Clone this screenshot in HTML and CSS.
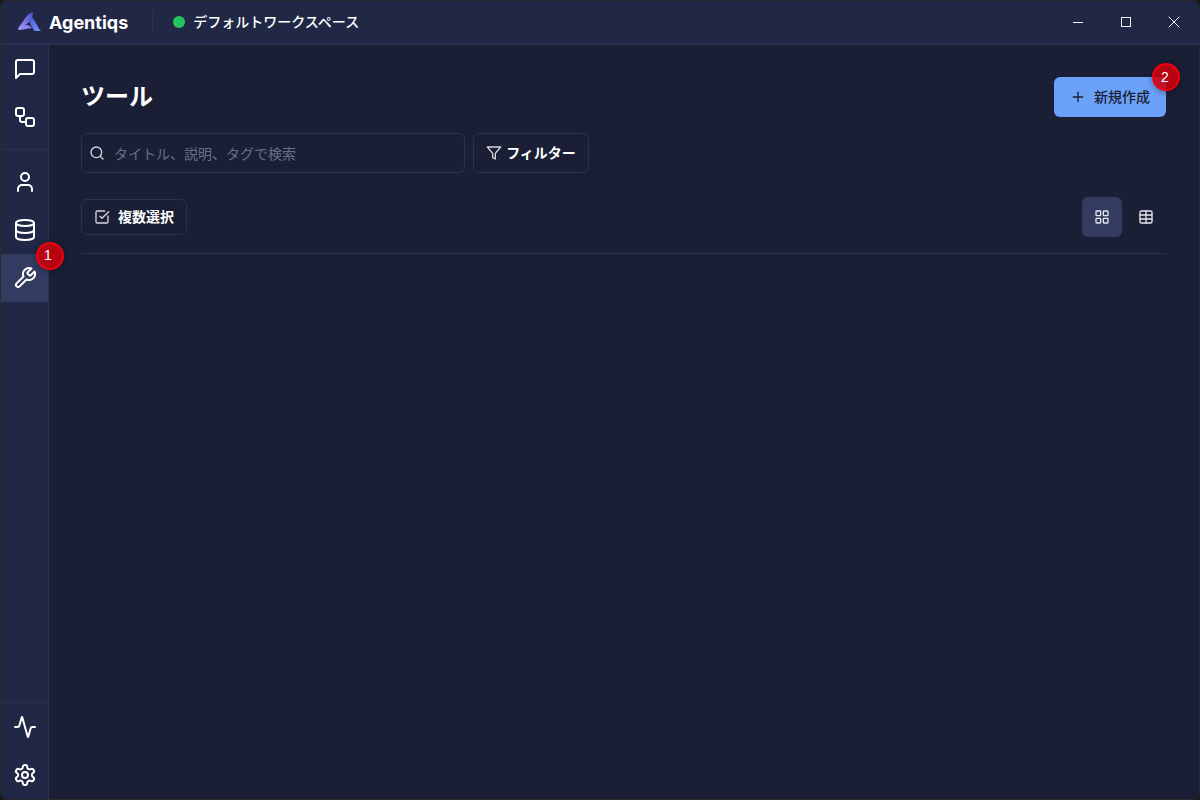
FILE: index.html
```html
<!DOCTYPE html>
<html lang="ja">
<head>
    <meta charset="UTF-8">
    <meta name="viewport" content="width=device-width, initial-scale=1.0">
    <title>Agentiqs</title>
    <link rel="stylesheet" href="styles.css">
</head>
<body>
    <div class="window">
        <header class="titlebar">
            <div class="brand">
                <svg class="logo" width="24" height="24" viewBox="0 0 24 24">
                    <defs>
                        <linearGradient id="logoGrad" x1="0" y1="1" x2="0.7" y2="0">
                            <stop offset="0" stop-color="#a998f6"/>
                            <stop offset="0.6" stop-color="#7a70e8"/>
                            <stop offset="1" stop-color="#4f55cc"/>
                        </linearGradient>
                        <linearGradient id="logoLeg" x1="0" y1="0" x2="1" y2="1">
                            <stop offset="0" stop-color="#4c5fd8"/>
                            <stop offset="1" stop-color="#7596f8"/>
                        </linearGradient>
                    </defs>
                    <path d="M16 2 C16 7 14 10 11 13 L8 15.500 C11 14.500 13 15.500 15 18 L3 20 C1.500 20.300 .6 19 1.300 18 L9 7 C11 4 13 2.800 16 2 Z" fill="url(#logoGrad)"/>
                    <path d="M15 7 L20 15 C21 17.500 22.500 20 24 21 L18 21 C16 20 15 16 12.500 12.500 Z" fill="url(#logoLeg)"/>
                </svg>
                <span class="brand-name">Agentiqs</span>
            </div>
            <div class="workspace">
                <span class="status-dot"></span>
                <span class="workspace-name">デフォルトワークスペース</span>
            </div>
            <div class="window-controls">
                <button class="win-btn"><svg width="12" height="12" viewBox="0 0 12 12"><path d="M1 6.500h10" stroke="currentColor" fill="none"/></svg></button>
                <button class="win-btn"><svg width="12" height="12" viewBox="0 0 12 12"><rect x="1.500" y="1.500" width="9" height="9" stroke="currentColor" fill="none"/></svg></button>
                <button class="win-btn"><svg width="12" height="12" viewBox="0 0 12 12"><path d="M.7.700l10.600 10.600M11.300.700L.7 11.300" stroke="currentColor" fill="none"/></svg></button>
            </div>
        </header>

        <div class="body">
            <nav class="sidebar">
                <div class="nav-group nav-top">
                    <a class="nav-item"><svg class="icon-nav" viewBox="0 0 24 24"><path d="M21 15a2 2 0 0 1-2 2H7l-4 4V5a2 2 0 0 1 2-2h14a2 2 0 0 1 2 2z"/></svg></a>
                    <a class="nav-item"><svg class="icon-nav" viewBox="0 0 24 24"><rect x="3" y="3" width="8" height="8" rx="2"/><path d="M7 11v4a2 2 0 0 0 2 2h4"/><rect x="13" y="13" width="8" height="8" rx="2"/></svg></a>
                </div>
                <div class="nav-group nav-middle">
                    <a class="nav-item"><svg class="icon-nav" viewBox="0 0 24 24"><path d="M19 21v-2a4 4 0 0 0-4-4H9a4 4 0 0 0-4 4v2"/><circle cx="12" cy="7" r="4"/></svg></a>
                    <a class="nav-item"><svg class="icon-nav" viewBox="0 0 24 24"><ellipse cx="12" cy="5" rx="9" ry="3"/><path d="M3 5v14a9 3 0 0 0 18 0V5"/><path d="M3 12a9 3 0 0 0 18 0"/></svg></a>
                    <a class="nav-item active"><svg class="icon-nav" viewBox="0 0 24 24"><path d="M14.700 6.300a1 1 0 0 0 0 1.400l1.600 1.600a1 1 0 0 0 1.400 0l3.770-3.770a6 6 0 0 1-7.940 7.940l-6.910 6.910a2.120 2.120 0 0 1-3-3l6.910-6.910a6 6 0 0 1 7.940-7.940l-3.760 3.760z"/></svg></a>
                </div>
                <div class="nav-group nav-bottom">
                    <a class="nav-item"><svg class="icon-nav" viewBox="0 0 24 24"><path d="M22 12h-2.480a2 2 0 0 0-1.930 1.460l-2.350 8.360a.25.250 0 0 1-.48 0L9.240 2.180a.25.250 0 0 0-.48 0l-2.350 8.360A2 2 0 0 1 4.490 12H2"/></svg></a>
                    <a class="nav-item"><svg class="icon-nav" viewBox="0 0 24 24"><path d="M12.220 2h-.44a2 2 0 0 0-2 2v.18a2 2 0 0 1-1 1.730l-.43.250a2 2 0 0 1-2 0l-.15-.080a2 2 0 0 0-2.730.730l-.22.380a2 2 0 0 0 .73 2.730l.15.100a2 2 0 0 1 1 1.720v.510a2 2 0 0 1-1 1.740l-.15.090a2 2 0 0 0-.73 2.730l.22.380a2 2 0 0 0 2.730.730l.15-.080a2 2 0 0 1 2 0l.43.250a2 2 0 0 1 1 1.730V20a2 2 0 0 0 2 2h.44a2 2 0 0 0 2-2v-.18a2 2 0 0 1 1-1.730l.43-.250a2 2 0 0 1 2 0l.15.080a2 2 0 0 0 2.730-.730l.22-.390a2 2 0 0 0-.73-2.730l-.15-.080a2 2 0 0 1-1-1.740v-.500a2 2 0 0 1 1-1.740l.15-.090a2 2 0 0 0 .73-2.730l-.22-.380a2 2 0 0 0-2.730-.730l-.15.080a2 2 0 0 1-2 0l-.43-.250a2 2 0 0 1-1-1.730V4a2 2 0 0 0-2-2z"/><circle cx="12" cy="12" r="3"/></svg></a>
                </div>
                <span class="badge badge-nav">1</span>
            </nav>

            <main class="content">
                <div class="page-header">
                    <h1>ツール</h1>
                    <button class="btn-primary">
                        <svg class="icon-sm" viewBox="0 0 24 24"><path d="M5 12h14"/><path d="M12 5v14"/></svg>
                        <span class="label">新規作成</span>
                        <span class="badge badge-new">2</span>
                    </button>
                </div>

                <div class="search-row">
                    <label class="search-box">
                        <svg class="icon-sm" viewBox="0 0 24 24"><circle cx="11" cy="11" r="8"/><path d="m21 21-4.300-4.300"/></svg>
                        <input type="text" placeholder="タイトル、説明、タグで検索">
                    </label>
                    <button class="btn-outline btn-filter">
                        <svg class="icon-sm" viewBox="0 0 24 24"><path d="M22 3H2l8 9.460V19l4 2v-8.540L22 3z"/></svg>
                        <span class="label">フィルター</span>
                    </button>
                </div>

                <div class="list-toolbar">
                    <button class="btn-outline btn-select">
                        <svg class="icon-sm" viewBox="0 0 24 24"><path d="M21 10.500V19a2 2 0 0 1-2 2H5a2 2 0 0 1-2-2V5a2 2 0 0 1 2-2h11"/><path d="m9 11 3 3L22 4"/></svg>
                        <span class="label">複数選択</span>
                    </button>
                    <div class="view-toggle">
                        <button class="view-btn selected"><svg class="icon-sm" viewBox="0 0 24 24"><rect x="3" y="3" width="7" height="7" rx="1"/><rect x="14" y="3" width="7" height="7" rx="1"/><rect x="14" y="14" width="7" height="7" rx="1"/><rect x="3" y="14" width="7" height="7" rx="1"/></svg></button>
                        <button class="view-btn"><svg class="icon-sm" viewBox="0 0 24 24"><path d="M12 3v18"/><rect x="3" y="3" width="18" height="18" rx="2"/><path d="M3 9h18"/><path d="M3 15h18"/></svg></button>
                    </div>
                </div>
            </main>
        </div>
    </div>
</body>
</html>
```

FILE: styles.css
```css
* {
    box-sizing: border-box;
}

html, body {
    margin: 0;
    padding: 0;
    height: 100%;
    background: #1c1c1c;
    overflow: hidden;
    font-family: Inter, "Noto Sans CJK JP", sans-serif;
}

button {
    font-family: inherit;
    cursor: pointer;
}

.window {
    width: 1200px;
    height: 800px;
    display: flex;
    flex-direction: column;
    background: #1a1f35;
    border: 1px solid #2b2b2e;
    border-radius: 9px;
    overflow: hidden;
    color: #fff;
}

.titlebar {
    height: 44px;
    flex-shrink: 0;
    display: flex;
    align-items: center;
    background: #212846;
    border-bottom: 2px solid #2b3251;
}

.brand {
    display: flex;
    align-items: center;
    gap: 8px;
    padding-left: 16px;
    padding-right: 24px;
    border-right: 1px solid #2b3251;
    height: 24px;
}

.brand-name {
    font-size: 18px;
    font-weight: 700;
}

.workspace {
    display: flex;
    align-items: center;
    gap: 8px;
    padding-left: 20px;
    font-size: 14px;
    font-weight: 500;
}

.workspace-name {
    margin-bottom: 2px;
}

.status-dot {
    width: 12px;
    height: 12px;
    border-radius: 50%;
    background: #22c55e;
}

.window-controls {
    display: flex;
    margin-left: auto;
    padding-right: 1px;
}

.win-btn {
    width: 48px;
    height: 42px;
    display: flex;
    align-items: center;
    justify-content: center;
    border: none;
    background: none;
    color: #f1f2f6;
    padding: 0;
}

.body {
    flex: 1;
    display: flex;
    min-height: 0;
}

.sidebar {
    position: relative;
    width: 48px;
    flex-shrink: 0;
    display: flex;
    flex-direction: column;
    background: #212846;
    border-right: 1px solid #2b3251;
}

.nav-group {
    display: flex;
    flex-direction: column;
}

.nav-top {
    padding-bottom: 8px;
    border-bottom: 1px solid #2b3251;
}

.nav-middle {
    padding-top: 8px;
}

.nav-bottom {
    margin-top: auto;
    border-top: 1px solid #2b3251;
}

.nav-item {
    height: 48px;
    display: flex;
    align-items: center;
    justify-content: center;
}

.nav-item.active {
    background: #343b61;
}

.icon-nav {
    width: 24px;
    height: 24px;
    fill: none;
    stroke: #fff;
    stroke-width: 2;
    stroke-linecap: round;
    stroke-linejoin: round;
}

.icon-sm {
    width: 16px;
    height: 16px;
    flex-shrink: 0;
    fill: none;
    stroke: currentColor;
    stroke-width: 2;
    stroke-linecap: round;
    stroke-linejoin: round;
}

.label {
    margin-bottom: 2px;
}

.badge {
    position: absolute;
    width: 28px;
    height: 28px;
    display: flex;
    align-items: center;
    justify-content: center;
    padding-right: 4px;
    border-radius: 50%;
    background: rgba(204, 0, 12, 0.88);
    border: 2px solid #ee0010;
    box-shadow: 0 1px 6px rgba(0, 0, 0, 0.4);
    color: #fff;
    font-size: 14px;
    font-weight: 400;
    font-family: "Liberation Sans", sans-serif;
    z-index: 2;
}

.badge-nav {
    top: 197px;
    left: 35px;
    padding-bottom: 2px;
}

.badge-new {
    top: -14px;
    right: -14px;
    padding-right: 2px;
}

.content {
    flex: 1;
    min-width: 0;
    padding: 32px 33px 0 32px;
    background: #1a1f35;
}

.page-header {
    display: flex;
    justify-content: space-between;
    align-items: center;
    height: 40px;
    margin-bottom: 16px;
}

h1 {
    margin: 0;
    font-size: 24px;
    font-weight: 700;
    line-height: 38px;
}

.btn-primary {
    position: relative;
    width: 112px;
    height: 40px;
    display: flex;
    align-items: center;
    justify-content: center;
    gap: 8px;
    border: none;
    border-radius: 6px;
    background: #6ba1f8;
    color: #1a1f35;
    font-size: 14px;
    font-weight: 500;
    padding: 0;
}

.search-row {
    display: flex;
    gap: 8px;
    margin-bottom: 24px;
}

.search-box {
    width: 384px;
    height: 40px;
    display: flex;
    align-items: center;
    gap: 8px;
    padding: 0 8px 0 7px;
    border: 1px solid #2b3251;
    border-radius: 6px;
    color: #d5d7df;
}

.search-box input {
    flex: 1;
    min-width: 0;
    border: none;
    outline: none;
    background: none;
    color: #fff;
    font-family: inherit;
    font-size: 14px;
    padding: 0 0 0 1px;
}

.search-box input::placeholder {
    color: #64708a;
    opacity: 1;
}

.btn-outline {
    display: flex;
    align-items: center;
    border: 1px solid #2b3251;
    border-radius: 6px;
    background: none;
    color: #fff;
    font-size: 14px;
    font-weight: 700;
    padding: 0;
}

.btn-filter {
    width: 116px;
    height: 40px;
    justify-content: center;
    gap: 4px;
}

.btn-select {
    width: 106px;
    height: 36px;
    justify-content: center;
    gap: 8px;
}

.btn-select .icon-sm,
.btn-filter .icon-sm {
    color: #d5d7df;
}

.list-toolbar {
    display: flex;
    justify-content: space-between;
    align-items: center;
    padding-bottom: 16px;
    border-bottom: 1px solid #2b3251;
}

.view-toggle {
    display: flex;
    gap: 4px;
}

.view-btn {
    width: 40px;
    height: 40px;
    display: flex;
    align-items: center;
    justify-content: center;
    border: none;
    border-radius: 6px;
    background: none;
    color: #e3e5ec;
    padding: 0;
}

.view-btn.selected {
    background: #343b61;
}
```
